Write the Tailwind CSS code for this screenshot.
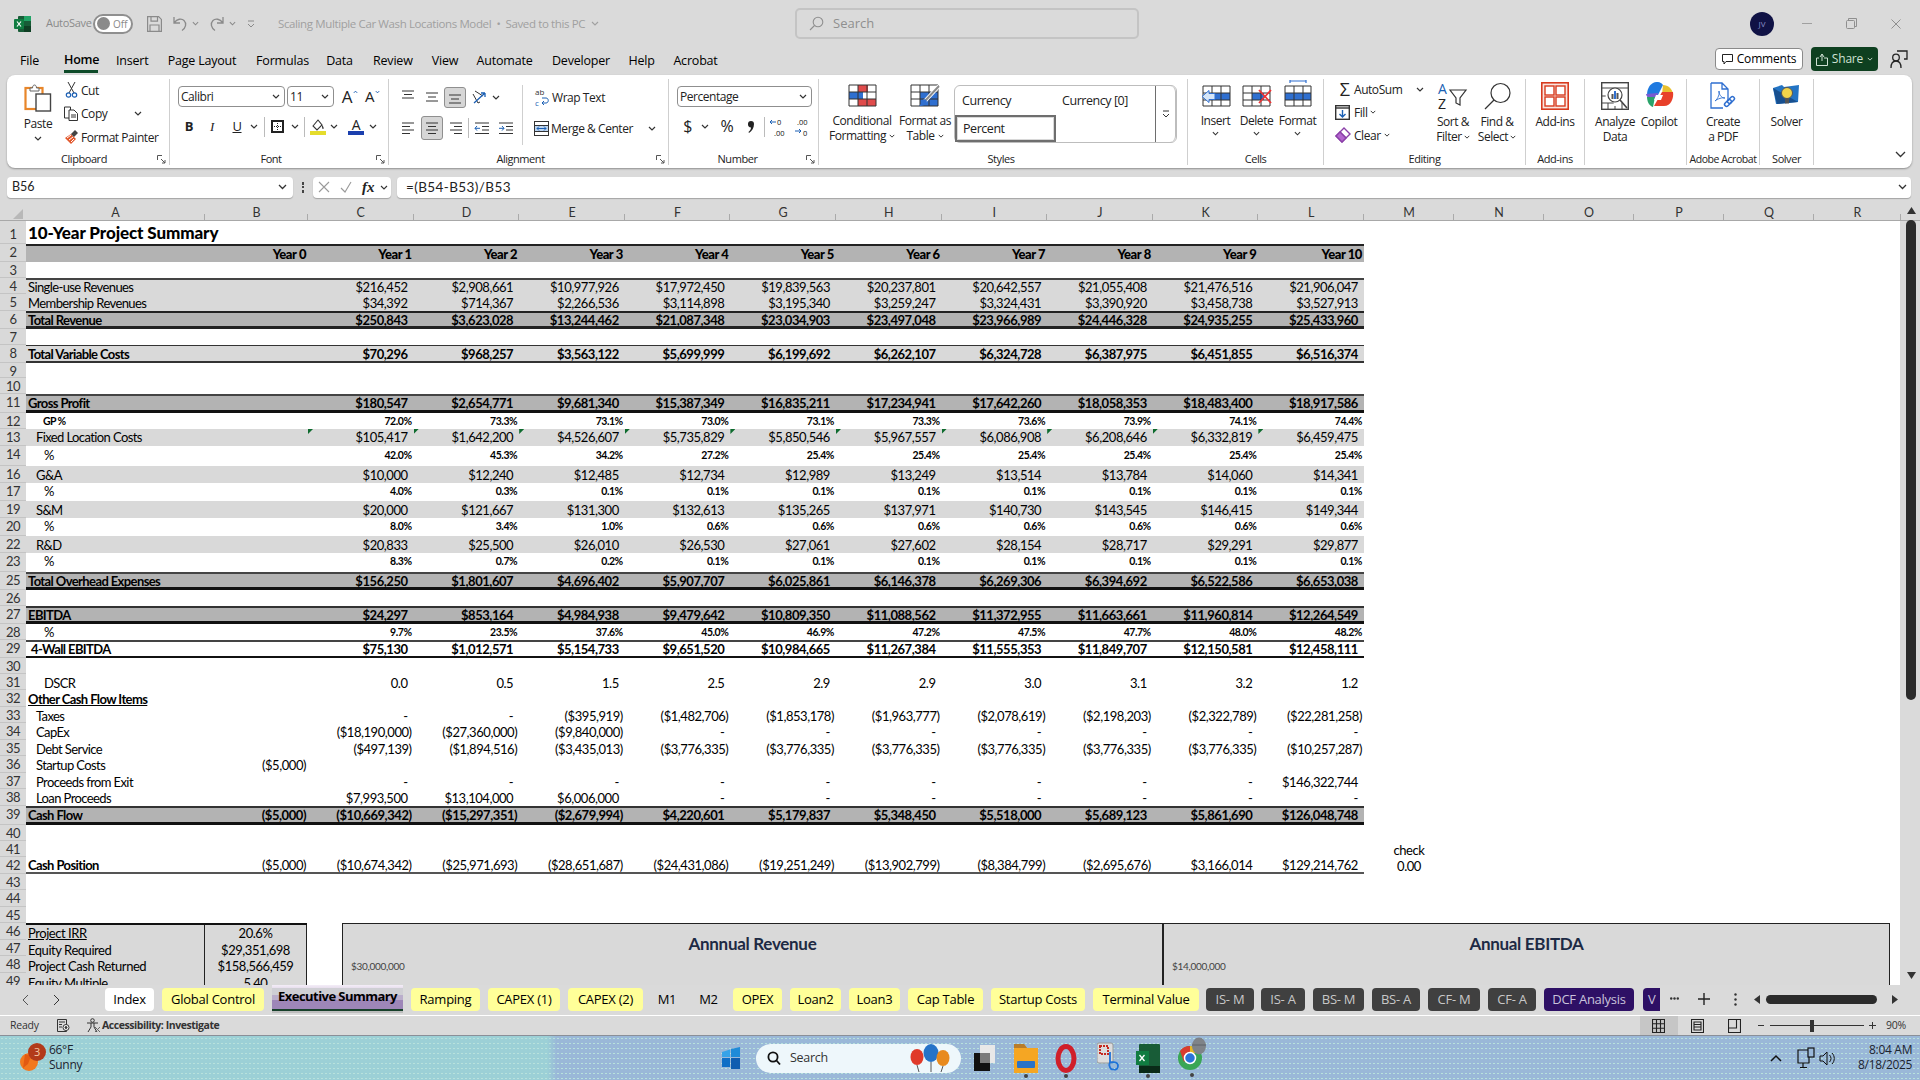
<!DOCTYPE html>
<html lang="en">
<head>
<meta charset="utf-8">
<title>Scaling Multiple Car Wash Locations Model</title>
<script src="https://cdn.jsdelivr.net/npm/@tailwindcss/browser@4"></script>
</head>
<body class="m-0">
<div class="flex flex-col w-[1920px] h-[1080px] overflow-hidden bg-[#dadada] font-['Open_Sans',sans-serif] text-black">

<!-- Title bar -->
<header class="flex items-center h-[47px] shrink-0 text-[11px] text-[#8a8a8a]">
  <svg class="ml-[14px] w-[17px] h-[16px]" viewBox="0 0 17 16"><rect x="4" y="0" width="13" height="16" rx="1" fill="#185c37"/><rect x="10" y="0" width="7" height="5" fill="#21a366"/><rect x="10" y="10" width="7" height="6" fill="#0f3f24"/><rect x="0" y="3" width="10" height="10" rx="1" fill="#107c41"/><path d="M3 5.5l4 5M7 5.5l-4 5" stroke="#fff" stroke-width="1.2"/></svg>
  <span class="ml-[15px] w-[41px] tracking-[-0.3px]">AutoSave</span>
  <div class="ml-[6px] flex items-center w-[40px] h-[20px] rounded-full border-2 border-[#8f8f8f] bg-white">
    <span class="ml-[2px] w-[13px] h-[13px] rounded-full bg-[#8a8a8a]"></span><span class="ml-[3px] text-[10px] leading-none">Off</span>
  </div>
  <svg class="ml-[14px] w-[15px] h-[16px]" viewBox="0 0 15 16" fill="none" stroke="#8a8a8a" stroke-width="1.2"><path d="M.6.6h11l2.8 2.8v12H.6zM4 .6v4.5h6.5V.6M3 15.4V9h9v6.4"/></svg>
  <svg class="ml-[11px] w-[15px] h-[16px]" viewBox="0 0 15 16" fill="none" stroke="#8a8a8a" stroke-width="1.3"><path d="M1 1v6h6M1.4 6.5C4 3 8.5 2 11 4.5c3 3 1.800 7.500-2 10"/></svg>
  <svg class="ml-[4px] w-[7px] h-[5px]" viewBox="0 0 8 5" fill="none" stroke="#8a8a8a" stroke-width="1.200"><path d="M1 1l3 3 3-3"/></svg>
  <svg class="ml-[10px] w-[15px] h-[16px]" viewBox="0 0 15 16" fill="none" stroke="#8a8a8a" stroke-width="1.300"><path d="M14 1v6H8M13.600 6.500C11 3 6.500 2 4 4.500c-3 3-1.800 7.500 2 10"/></svg>
  <svg class="ml-[5px] w-[7px] h-[5px]" viewBox="0 0 8 5" fill="none" stroke="#8a8a8a" stroke-width="1.200"><path d="M1 1l3 3 3-3"/></svg>
  <svg class="ml-[11px] w-[8px] h-[8px]" viewBox="0 0 8 8" fill="none" stroke="#8a8a8a"><path d="M1 1h6M1 4l3 3 3-3"/></svg>
  <div class="ml-[23px] w-[322px] flex items-center gap-[6px] text-[#a0a0a0] text-[11.5px] tracking-[-0.38px] whitespace-nowrap">Scaling Multiple Car Wash Locations Model &nbsp;•&nbsp; Saved to this PC
    <svg class="shrink-0 w-[8px] h-[5px]" viewBox="0 0 8 5" fill="none" stroke="#a0a0a0" stroke-width="1.100"><path d="M1 1l3 3 3-3"/></svg></div>
  <div class="ml-[195px] flex items-center w-[344px] h-[31px] rounded-[5px] border-2 border-[#c4c4c4] text-[#8f8f8f] text-[13px]">
    <svg class="ml-[12px] w-[15px] h-[15px]" viewBox="0 0 15 15" fill="none" stroke="#8f8f8f" stroke-width="1.100"><circle cx="9" cy="6" r="4.800"/><path d="M5.500 9.500L1 14"/></svg>
    <span class="ml-[9px]">Search</span>
  </div>
  <div class="ml-[611px] flex items-center justify-center w-[24px] h-[24px] rounded-full bg-[#101245] text-[#8a90c8] text-[8px]">JV</div>
  <span class="ml-[28px] w-[10px] h-[1px] bg-[#a0a0a0]"></span>
  <svg class="ml-[34px] w-[11px] h-[11px]" viewBox="0 0 11 11" fill="none" stroke="#8f8f8f"><rect x=".5" y="2.500" width="8" height="8" rx="1"/><path d="M2.500 2.500V.5h8v8H8.500"/></svg>
  <svg class="ml-[34px] w-[10px] h-[10px]" viewBox="0 0 10 10" stroke="#8f8f8f"><path d="M.5.5l9 9M9.500.5l-9 9"/></svg>
</header>

<!-- Menu tabs -->
<nav class="flex items-center h-[28px] shrink-0 text-[12.5px] tracking-[-0.2px] text-black whitespace-nowrap">
  <span class="ml-[20px] w-[18px] text-center">File</span>
  <span class="ml-[26px] w-[34px] text-center font-semibold self-start h-[26px] pt-[4px] border-b-[3px] border-[#0d4a28]">Home</span>
  <span class="ml-[18px] w-[32px] text-center">Insert</span>
  <span class="ml-[19px] w-[70px] text-center">Page Layout</span>
  <span class="ml-[19px] w-[53px] text-center">Formulas</span>
  <span class="ml-[17px] w-[27px] text-center">Data</span>
  <span class="ml-[20px] w-[39px] text-center">Review</span>
  <span class="ml-[19px] w-[28px] text-center">View</span>
  <span class="ml-[17px] w-[57px] text-center">Automate</span>
  <span class="ml-[19px] w-[58px] text-center">Developer</span>
  <span class="ml-[18px] w-[27px] text-center">Help</span>
  <span class="ml-[18px] w-[45px] text-center">Acrobat</span>
  <div class="ml-auto flex items-center justify-center gap-[4px] w-[88px] h-[22px] rounded-[4px] bg-white border border-[#8a8a8a] text-[12px] -mt-[4px]">
    <svg class="w-[11px] h-[11px]" viewBox="0 0 11 11" fill="none" stroke="#222"><path d="M.5.5h10v7H4L2 10V7.500H.5z"/></svg>Comments</div>
  <div class="ml-[8px] flex items-center justify-center gap-[4px] w-[67px] h-[24px] rounded-[4px] bg-[#0e4020] text-[#cfe0d4] text-[12px] -mt-[4px]">
    <svg class="w-[12px] h-[13px]" viewBox="0 0 12 13" fill="none" stroke="#cfe0d4"><path d="M8 5h3.500v7.500H.5V5H3M4 4l2-3 2 3M6 1v7"/></svg>Share
    <svg class="w-[6px] h-[4px]" viewBox="0 0 8 5" fill="none" stroke="#cfe0d4" stroke-width="1.200"><path d="M1 1l3 3 3-3"/></svg></div>
  <svg class="ml-[12px] mr-[12px] w-[18px] h-[19px] -mt-[4px]" viewBox="0 0 18 19" fill="none" stroke="#222" stroke-width="1.300"><path d="M7 1h10v8h-3M1 18c0-5 2-7 5-7s5 2 5 7"/><circle cx="6" cy="7.500" r="3.300"/></svg>
</nav>

<!-- Ribbon -->
<section class="flex mx-[7px] w-[1905px] h-[93px] shrink-0 rounded-[8px] bg-white shadow-[0_1px_2px_rgba(0,0,0,0.35)] text-[12px] leading-[15px] tracking-[-0.45px] text-[#222] pt-[4px] whitespace-nowrap">

  <!-- Clipboard -->
  <div class="w-[163px] h-[86px] border-r border-[#cfcfcf] flex flex-col">
    <div class="flex h-[74px] pl-[5px]">
      <div class="w-[52px] flex flex-col items-center pt-[4px]">
        <svg class="w-[28px] h-[29px]" viewBox="0 0 28 29" fill="none"><rect x="1.500" y="5" width="17" height="21" stroke="#e8862a" stroke-width="2.200"/><path d="M6 5h2.500c0-4 4-4 4 0H15v3H6z" fill="#fff" stroke="#666"/><rect x="12" y="11" width="14.500" height="17" fill="#fff" stroke="#444" stroke-width="1.400"/></svg>
        <span class="mt-[4px]">Paste</span>
        <svg class="mt-[5px] w-[8px] h-[5px]" viewBox="0 0 8 5" fill="none" stroke="#333" stroke-width="1.200"><path d="M1 1l3 3 3-3"/></svg>
      </div>
      <div class="flex flex-col gap-[1.500px]">
        <div class="flex items-center h-[22px]"><svg class="ml-[1px] w-[13px] h-[16px]" viewBox="0 0 13 16" fill="none"><path d="M3 0l6 11M10 0L4 11" stroke="#333"/><circle cx="3.500" cy="13" r="2.200" stroke="#1a5fb4" stroke-width="1.200"/><circle cx="9.500" cy="13" r="2.200" stroke="#1a5fb4" stroke-width="1.200"/></svg><span class="ml-[3px]">Cut</span></div>
        <div class="flex items-center h-[22px]"><svg class="w-[15px] h-[15px]" viewBox="0 0 15 15" fill="none" stroke="#333"><path d="M.5 1h6v11H.5z"/><path d="M5 4h5l3.500 3.500V14.500H5z" fill="#fff"/><path d="M7 9h5M7 11h5"/></svg><span class="ml-[2px]">Copy</span><svg class="ml-[27px] w-[8px] h-[5px]" viewBox="0 0 8 5" fill="none" stroke="#333" stroke-width="1.200"><path d="M1 1l3 3 3-3"/></svg></div>
        <div class="flex items-center h-[22px]"><svg class="w-[15px] h-[16px]" viewBox="0 0 15 16"><path d="M1 9l6-4 5 5-5 5C5 13 3 11 1 9z" fill="#e2572b"/><path d="M3 9l4-3M5 11l4-3M7 13l3-3" stroke="#fff"/><path d="M7 5l4-4 3 3-4 4" fill="#444"/></svg><span class="ml-[2px]">Format Painter</span></div>
      </div>
    </div>
    <div class="relative h-[12px] text-center text-[11px] leading-[12px] pr-[8px]">Clipboard<svg class="absolute right-[3px] top-[2px] w-[9px] h-[9px]" viewBox="0 0 9 9" fill="none" stroke="#555"><path d="M.5 5V.5H5M4 4l4 4M8 5v3H5"/></svg></div>
  </div>

  <!-- Font -->
  <div class="w-[219px] h-[86px] border-r border-[#cfcfcf] flex flex-col">
    <div class="h-[74px] pl-[8px]">
      <div class="flex items-center mt-[7px] h-[21px]">
        <div class="flex items-center justify-between w-[107px] h-[21px] pl-[2px] pr-[4px] border border-[#8f8f8f] rounded-[4px]">Calibri<svg class="w-[8px] h-[5px]" viewBox="0 0 8 5" fill="none" stroke="#333" stroke-width="1.200"><path d="M1 1l3 3 3-3"/></svg></div>
        <div class="ml-[2px] flex items-center justify-between w-[47px] h-[21px] pl-[2px] pr-[4px] border border-[#8f8f8f] rounded-[4px]">11<svg class="w-[8px] h-[5px]" viewBox="0 0 8 5" fill="none" stroke="#333" stroke-width="1.200"><path d="M1 1l3 3 3-3"/></svg></div>
        <span class="ml-[7px] w-[12px] text-[17px] text-center">A</span><svg class="w-[5px] h-[4px] -mt-[9px]" viewBox="0 0 6 4" fill="none" stroke="#1a5fb4" stroke-width="1.200"><path d="M1 3l2-2 2 2"/></svg>
        <span class="ml-[6px] w-[11px] text-[15px] text-center">A</span><svg class="w-[5px] h-[4px] -mt-[9px]" viewBox="0 0 6 4" fill="none" stroke="#1a5fb4" stroke-width="1.200"><path d="M1 1l2 2 2-2"/></svg>
      </div>
      <div class="flex items-center mt-[9px] h-[21px]">
        <span class="w-[22px] text-center font-bold text-[13px]">B</span>
        <span class="ml-[1px] w-[22px] text-center italic text-[13px] font-['Liberation_Serif',serif]">I</span>
        <span class="ml-[3px] w-[22px] text-center underline text-[13px]">U</span>
        <svg class="ml-[2px] w-[8px] h-[5px]" viewBox="0 0 8 5" fill="none" stroke="#333" stroke-width="1.200"><path d="M1 1l3 3 3-3"/></svg>
        <span class="ml-[6px] w-px h-[20px] bg-[#bbb]"></span>
        <svg class="ml-[6px] w-[13px] h-[13px]" viewBox="0 0 13 13" fill="none" stroke="#222"><rect x="1" y="1" width="11" height="11" stroke-width="2"/><path d="M6.500 1v11M1 6.500h11" stroke-dasharray="1 1"/></svg>
        <svg class="ml-[7px] w-[8px] h-[5px]" viewBox="0 0 8 5" fill="none" stroke="#333" stroke-width="1.200"><path d="M1 1l3 3 3-3"/></svg>
        <span class="ml-[5px] w-px h-[20px] bg-[#bbb]"></span>
        <svg class="ml-[5px] w-[16px] h-[17px]" viewBox="0 0 16 17"><path d="M3 8l5-6 4 5-5 5z" fill="none" stroke="#333" stroke-width="1.100"/><path d="M12 7c2 2 2 4 1 4s-1-2-1-4z" fill="#333"/><rect x="0" y="13" width="16" height="4" fill="#e5dc2b"/></svg>
        <svg class="ml-[4px] w-[8px] h-[5px]" viewBox="0 0 8 5" fill="none" stroke="#333" stroke-width="1.200"><path d="M1 1l3 3 3-3"/></svg>
        <div class="ml-[10px] flex flex-col items-center w-[16px] leading-[12px] text-[14px]"><span>A</span><span class="w-[16px] h-[4px] bg-[#1b3fae]"></span></div>
        <svg class="ml-[5px] w-[8px] h-[5px]" viewBox="0 0 8 5" fill="none" stroke="#333" stroke-width="1.200"><path d="M1 1l3 3 3-3"/></svg>
      </div>
    </div>
    <div class="relative h-[12px] text-center text-[11px] leading-[12px] pr-[16px]">Font<svg class="absolute right-[3px] top-[2px] w-[9px] h-[9px]" viewBox="0 0 9 9" fill="none" stroke="#555"><path d="M.5 5V.5H5M4 4l4 4M8 5v3H5"/></svg></div>
  </div>

  <!-- Alignment -->
  <div class="w-[280px] h-[86px] border-r border-[#cfcfcf] flex flex-col">
    <div class="flex h-[74px]">
      <div class="w-[134px] h-[60px] mt-[6px] border-r border-[#cfcfcf] pl-[7px]">
        <div class="flex items-center h-[22px] mt-[1px]">
          <div class="flex justify-center items-start w-[24px] h-[21px] pt-[3px]"><svg class="w-[14px] h-[11px]" viewBox="0 0 14 11" stroke="#333"><path d="M1 1h12M3 4.500h8M1 8h12"/></svg></div>
          <div class="flex justify-center items-center w-[24px] h-[21px]"><svg class="w-[14px] h-[11px]" viewBox="0 0 14 11" stroke="#333"><path d="M1 1h12M3 5h8M1 9h12"/></svg></div>
          <div class="flex justify-center items-end w-[22px] h-[21px] pb-[3px] bg-[#d6d6d6] border border-[#8f8f8f] rounded-[3px]"><svg class="w-[14px] h-[11px]" viewBox="0 0 14 11" stroke="#333"><path d="M1 2h12M3 6h8M1 10h12"/></svg></div>
          <svg class="ml-[5px] w-[16px] h-[16px]" viewBox="0 0 16 16" fill="none"><path d="M2 5l5 9 2-1M4 2l8 5" stroke="#333"/><path d="M3 14L14 4M14 4h-4M14 4v4" stroke="#1a5fb4" stroke-width="1.300"/></svg>
          <svg class="ml-[5px] w-[8px] h-[5px]" viewBox="0 0 8 5" fill="none" stroke="#333" stroke-width="1.200"><path d="M1 1l3 3 3-3"/></svg>
        </div>
        <div class="flex items-center h-[22px] mt-[9px]">
          <div class="flex justify-center items-center w-[24px] h-[21px]"><svg class="w-[14px] h-[13px]" viewBox="0 0 14 13" stroke="#333"><path d="M1 1h12M1 4.500h8M1 8h12M1 11.500h8"/></svg></div>
          <div class="flex justify-center items-center w-[22px] h-[24px] mx-[1px] bg-[#d6d6d6] border border-[#8f8f8f] rounded-[3px]"><svg class="w-[14px] h-[13px]" viewBox="0 0 14 13" stroke="#333"><path d="M1 1h12M3 4.500h8M1 8h12M3 11.500h8"/></svg></div>
          <div class="flex justify-center items-center w-[24px] h-[21px]"><svg class="w-[14px] h-[13px]" viewBox="0 0 14 13" stroke="#333"><path d="M1 1h12M5 4.500h8M1 8h12M5 11.500h8"/></svg></div>
          <span class="w-px h-[20px] bg-[#bbb]"></span>
          <svg class="ml-[5px] w-[16px] h-[13px]" viewBox="0 0 16 13" fill="none" stroke="#333"><path d="M1 1h14M8 4.500h7M8 8h7M1 11.500h14"/><path d="M6 6.300H1M3 4L1 6.300l2 2.300" stroke="#1a5fb4"/></svg>
          <svg class="ml-[8px] w-[16px] h-[13px]" viewBox="0 0 16 13" fill="none" stroke="#333"><path d="M1 1h14M8 4.500h7M8 8h7M1 11.500h14"/><path d="M1 6.300h5M4 4l2 2.300-2 2.300" stroke="#1a5fb4"/></svg>
        </div>
      </div>
      <div class="pl-[10px] mt-[6px]">
        <div class="flex items-center h-[22px] mt-[1px]"><svg class="w-[18px] h-[18px] overflow-visible" viewBox="0 0 18 18" fill="none"><text x="2" y="7" font-size="8" letter-spacing="0" fill="#333" font-family="Open Sans">ab</text><text x="2" y="18" font-size="8" letter-spacing="0" fill="#1a5fb4" font-family="Open Sans">c</text><path d="M9 10h4c3 0 3 5 0 5h-4M11 13l-2 2 2 2" stroke="#1a5fb4"/></svg><span class="ml-[1px]">Wrap Text</span></div>
        <div class="flex items-center h-[22px] mt-[9px]"><svg class="ml-[1px] w-[15px] h-[15px] mr-[2px]" viewBox="0 0 15 15" fill="none" stroke="#333"><rect x=".5" y=".5" width="14" height="14"/><path d="M.5 4.500h14M.5 10.500h14"/><rect x="1" y="5" width="13" height="5" fill="#bcd4ef" stroke="none"/><path d="M3 7.500h9M5 5.500l-2 2 2 2M10 5.500l2 2-2 2" stroke="#1a5fb4"/></svg><span>Merge &amp; Center</span><svg class="ml-[15px] w-[8px] h-[5px]" viewBox="0 0 8 5" fill="none" stroke="#333" stroke-width="1.200"><path d="M1 1l3 3 3-3"/></svg></div>
      </div>
    </div>
    <div class="relative h-[12px] text-center text-[11px] leading-[12px] pr-[16px]">Alignment<svg class="absolute right-[3px] top-[2px] w-[9px] h-[9px]" viewBox="0 0 9 9" fill="none" stroke="#555"><path d="M.5 5V.5H5M4 4l4 4M8 5v3H5"/></svg></div>
  </div>

  <!-- Number -->
  <div class="w-[150px] h-[86px] border-r border-[#cfcfcf] flex flex-col">
    <div class="h-[74px] pl-[8px]">
      <div class="flex items-center justify-between mt-[7px] w-[135px] h-[21px] pl-[2px] pr-[4px] border border-[#8f8f8f] rounded-[4px]">Percentage<svg class="w-[8px] h-[5px]" viewBox="0 0 8 5" fill="none" stroke="#333" stroke-width="1.200"><path d="M1 1l3 3 3-3"/></svg></div>
      <div class="flex items-center mt-[9px] h-[21px]">
        <span class="ml-[5px] w-[11px] text-center text-[16px]">$</span>
        <svg class="ml-[8px] w-[8px] h-[5px]" viewBox="0 0 8 5" fill="none" stroke="#333" stroke-width="1.200"><path d="M1 1l3 3 3-3"/></svg>
        <span class="ml-[10px] w-[16px] text-center text-[16px]">%</span>
        <svg class="ml-[12px] w-[8px] h-[13px]" viewBox="0 0 8 13"><path d="M1 4a3 3 0 1 1 6 0c0 4-2 7-5 9l-.5-1c1.500-1 2.500-3 2.500-4.500A3 3 0 0 1 1 4z" fill="#222"/></svg>
        <span class="ml-[9px] w-px h-[20px] bg-[#bbb]"></span>
        <svg class="ml-[4px] w-[18px] h-[18px] overflow-visible" viewBox="0 0 18 18"><text x="8" y="7" font-size="7.500" letter-spacing="0" fill="#111" font-family="Open Sans">0</text><text x="5" y="17.500" font-size="7.500" letter-spacing="0" fill="#111" font-family="Open Sans">.00</text><path d="M7 4H1M3 2L1 4l2 2" fill="none" stroke="#1a5fb4"/></svg>
        <svg class="ml-[5px] w-[18px] h-[18px] overflow-visible" viewBox="0 0 18 18"><text x="5" y="7" font-size="7.500" letter-spacing="0" fill="#111" font-family="Open Sans">.00</text><text x="11" y="17.500" font-size="7.500" letter-spacing="0" fill="#111" font-family="Open Sans">0</text><path d="M3 13h6M7 11l2 2-2 2" fill="none" stroke="#1a5fb4"/></svg>
      </div>
    </div>
    <div class="relative h-[12px] text-center text-[11px] leading-[12px] pr-[12px]">Number<svg class="absolute right-[3px] top-[2px] w-[9px] h-[9px]" viewBox="0 0 9 9" fill="none" stroke="#555"><path d="M.5 5V.5H5M4 4l4 4M8 5v3H5"/></svg></div>
  </div>

  <!-- Styles -->
  <div class="w-[369px] h-[86px] border-r border-[#cfcfcf] flex flex-col">
    <div class="flex h-[74px] pl-[13px]">
      <div class="w-[60px] flex flex-col items-center pt-[5px]">
        <svg class="w-[29px] h-[23px] mb-[6px]" viewBox="0 0 29 23" fill="none"><rect x="10" y="1" width="10" height="7" fill="#e04b4b"/><rect x="10" y="15" width="18" height="7" fill="#e04b4b"/><rect x="1" y="8" width="14" height="7" fill="#2f6fd0"/><path d="M1 1h27v21H1zM1 8h27M1 15h27M10 1v21M19 1v21" stroke="#333"/></svg>
        <span>Conditional</span>
        <span class="flex items-center gap-[3px]">Formatting<svg class="w-[6px] h-[4px]" viewBox="0 0 8 5" fill="none" stroke="#333" stroke-width="1.300"><path d="M1 1l3 3 3-3"/></svg></span>
      </div>
      <div class="ml-[8px] w-[50px] flex flex-col items-center pt-[5px]">
        <svg class="w-[30px] h-[23px] mb-[6px]" viewBox="0 0 30 23" fill="none"><rect x="10" y="8" width="18" height="14" fill="#2f6fd0"/><path d="M1 1h27v21H1zM1 8h27M1 15h27M10 1v21M19 1v21" stroke="#333"/><path d="M29 2L15 17" stroke="#fff" stroke-width="4"/><path d="M29 2L15 17" stroke="#8a8a8a" stroke-width="2"/><path d="M15 15c-3 1-3 5-6 7 4 0 7-1 8-5z" fill="#2f6fd0"/></svg>
        <span>Format as</span>
        <span class="flex items-center gap-[3px]">Table<svg class="w-[6px] h-[4px]" viewBox="0 0 8 5" fill="none" stroke="#333" stroke-width="1.300"><path d="M1 1l3 3 3-3"/></svg></span>
      </div>
      <div class="ml-[4px] mt-[6px] flex w-[223px] h-[58px] border border-[#bdbdbd] rounded-[6px] text-[12.5px]">
        <div class="w-[202px]">
          <div class="flex items-center h-[29px] pl-[7px]"><span class="w-[100px]">Currency</span><span>Currency [0]</span></div>
          <div class="flex items-center w-[101px] h-[27px] pl-[6px] border-[2px] border-[#6e6e6e] shadow-[inset_0_0_0_1px_#d8d8d8]">Percent</div>
        </div>
        <div class="flex items-center justify-center w-[21px] border-x border-[#6e6e6e] border-r-[#bdbdbd] rounded-r-[6px]"><svg class="w-[8px] h-[8px]" viewBox="0 0 8 8" fill="none" stroke="#333"><path d="M1 1h6M1 4l3 3 3-3"/></svg></div>
      </div>
    </div>
    <div class="h-[12px] text-center text-[11px] leading-[12px] pr-[4px]">Styles</div>
  </div>

  <!-- Cells -->
  <div class="w-[136px] h-[86px] border-r border-[#cfcfcf] flex flex-col">
    <div class="flex h-[74px] pl-[7px]">
      <div class="w-[41px] flex flex-col items-center pt-[6px]">
        <svg class="w-[30px] h-[22px] mb-[6px]" viewBox="0 0 30 22" fill="none"><rect x="12" y="8" width="17" height="7" fill="#2f6fd0"/><path d="M2 1h27v20H2zM2 8h27M2 15h27M11 1v20M20 1v20" stroke="#333"/><path d="M1 11.500l7-6v3h6v6H8v3z" fill="#d6e6f8" stroke="#2f6fd0"/></svg>
        <span>Insert</span>
        <svg class="mt-[3px] w-[7px] h-[5px]" viewBox="0 0 8 5" fill="none" stroke="#333" stroke-width="1.200"><path d="M1 1l3 3 3-3"/></svg>
      </div>
      <div class="w-[41px] flex flex-col items-center pt-[6px]">
        <svg class="w-[30px] h-[22px] mb-[6px]" viewBox="0 0 30 22" fill="none"><rect x="10" y="8" width="12" height="7" fill="#2f6fd0"/><path d="M1 1h27v20H1zM1 8h27M1 15h27M10 1v20M19 1v20" stroke="#333"/><path d="M17 5l12 13M29 5L17 18" stroke="#e33" stroke-width="1.800"/></svg>
        <span>Delete</span>
        <svg class="mt-[3px] w-[7px] h-[5px]" viewBox="0 0 8 5" fill="none" stroke="#333" stroke-width="1.200"><path d="M1 1l3 3 3-3"/></svg>
      </div>
      <div class="w-[41px] flex flex-col items-center pt-[1px]">
        <svg class="w-[28px] h-[27px] mb-[6px]" viewBox="0 0 28 27" fill="none"><path d="M6 1h16M6 0v3M22 0v3" stroke="#2f6fd0" stroke-width="1.200"/><rect x="1" y="13" width="26" height="7" fill="#2f6fd0"/><path d="M1 6h26v20H1zM1 13h26M1 20h26M10 6v20M19 6v20" stroke="#333"/></svg>
        <span>Format</span>
        <svg class="mt-[3px] w-[7px] h-[5px]" viewBox="0 0 8 5" fill="none" stroke="#333" stroke-width="1.200"><path d="M1 1l3 3 3-3"/></svg>
      </div>
    </div>
    <div class="h-[12px] text-center text-[11px] leading-[12px]">Cells</div>
  </div>

  <!-- Editing -->
  <div class="w-[202px] h-[86px] border-r border-[#cfcfcf] flex flex-col">
    <div class="flex h-[74px] pl-[11px]">
      <div class="w-[96px] flex flex-col gap-[1px] -mt-[1px]">
        <div class="flex items-center h-[22px]"><span class="w-[19px] text-[18px] text-center leading-none">Σ</span><span>AutoSum</span><svg class="ml-[14px] w-[8px] h-[5px]" viewBox="0 0 8 5" fill="none" stroke="#333" stroke-width="1.200"><path d="M1 1l3 3 3-3"/></svg></div>
        <div class="flex items-center h-[22px]"><svg class="w-[15px] h-[15px] mr-[4px]" viewBox="0 0 15 15" fill="none"><rect x=".7" y=".7" width="13.600" height="13.600" stroke="#333" stroke-width="1.400"/><path d="M0 3h15" stroke="#333" stroke-width="1.400"/><path d="M7.500 5v7M4.500 9l3 3 3-3" stroke="#1a5fb4" stroke-width="1.400"/></svg><span>Fill</span><svg class="ml-[3px] w-[6px] h-[4px]" viewBox="0 0 8 5" fill="none" stroke="#333" stroke-width="1.300"><path d="M1 1l3 3 3-3"/></svg></div>
        <div class="flex items-center h-[22px]"><svg class="w-[16px] h-[16px] mr-[3px]" viewBox="0 0 16 16" fill="#fff" stroke="#8a3fa8" stroke-width="1.400"><path d="M9 1l6 6-8 8-6-6z"/><path d="M5 5l6 6" /><path d="M1 9l4-4 6 6-4 4z" fill="#b467cf"/></svg><span>Clear</span><svg class="ml-[3px] w-[6px] h-[4px]" viewBox="0 0 8 5" fill="none" stroke="#333" stroke-width="1.300"><path d="M1 1l3 3 3-3"/></svg></div>
      </div>
      <div class="w-[44px] flex flex-col items-center pt-[3px]">
        <svg class="w-[30px] h-[28px] mb-[4px] overflow-visible" viewBox="0 0 30 28" fill="none"><text x="0" y="12" font-size="14" letter-spacing="0" fill="#1a5fb4" font-family="Open Sans">A</text><text x="0" y="27" font-size="14" letter-spacing="0" fill="#222" font-family="Open Sans">Z</text><path d="M12 8h16l-6 8v7l-4 -2v-5z" stroke="#333" stroke-width="1.200"/></svg>
        <span>Sort &amp;</span>
        <span class="flex items-center gap-[2px]">Filter<svg class="w-[6px] h-[4px]" viewBox="0 0 8 5" fill="none" stroke="#333" stroke-width="1.300"><path d="M1 1l3 3 3-3"/></svg></span>
      </div>
      <div class="w-[44px] flex flex-col items-center pt-[3px]">
        <svg class="w-[29px] h-[28px] mb-[4px]" viewBox="0 0 29 28" fill="none" stroke="#333" stroke-width="1.200"><circle cx="17.500" cy="11" r="9.500"/><path d="M11 18L2 27"/></svg>
        <span>Find &amp;</span>
        <span class="flex items-center gap-[2px]">Select<svg class="w-[6px] h-[4px]" viewBox="0 0 8 5" fill="none" stroke="#333" stroke-width="1.300"><path d="M1 1l3 3 3-3"/></svg></span>
      </div>
    </div>
    <div class="h-[12px] text-center text-[11px] leading-[12px]">Editing</div>
  </div>

  <!-- Add-ins -->
  <div class="w-[59px] h-[86px] border-r border-[#cfcfcf] flex flex-col">
    <div class="flex flex-col items-center h-[74px] pt-[3px]">
      <svg class="w-[28px] h-[28px] mb-[4px]" viewBox="0 0 28 28" fill="none"><rect x=".8" y=".8" width="26.400" height="26.400" stroke="#d83b1f" stroke-width="1.600" fill="#f9e6e0"/><rect x="4" y="4" width="9" height="9" fill="#fff" stroke="#d83b1f" stroke-width="1.400"/><rect x="15" y="4" width="9" height="9" fill="#fff" stroke="#d83b1f" stroke-width="1.400"/><rect x="4" y="15" width="9" height="9" fill="#fff" stroke="#d83b1f" stroke-width="1.400"/><rect x="15" y="15" width="9" height="9" fill="#fff" stroke="#d83b1f" stroke-width="1.400"/></svg>
      <span>Add-ins</span>
    </div>
    <div class="h-[12px] text-center text-[11px] leading-[12px]">Add-ins</div>
  </div>

  <!-- Analyze / Copilot -->
  <div class="w-[102px] h-[86px] border-r border-[#cfcfcf] flex pl-[8px]">
    <div class="w-[44px] flex flex-col items-center pt-[3px]">
      <svg class="w-[28px] h-[28px] mb-[4px]" viewBox="0 0 28 28" fill="none" stroke="#444"><rect x=".7" y=".7" width="26.600" height="26.600" stroke-width="1.400"/><path d="M.7 6h26.600M.7 14h4M.7 21h12M7 21v6M14 24v3M21 21v6" /><circle cx="14" cy="13" r="7" fill="#fff" stroke-width="1.200"/><rect x="10.500" y="12" width="2" height="5" fill="#555" stroke="none"/><rect x="13" y="9" width="2" height="8" fill="#2f6fd0" stroke="none"/><rect x="15.500" y="11" width="2" height="6" fill="#555" stroke="none"/><path d="M19 18l7 8" stroke-width="1.600"/></svg>
      <span>Analyze</span><span>Data</span>
    </div>
    <div class="w-[44px] flex flex-col items-center pt-[3px]">
      <svg class="w-[29px] h-[28px] mb-[4px]" viewBox="0 0 29 28"><path d="M8 1c4-2 8-1 10 2l-5 10H2C2 8 4 3 8 1z" fill="#1f7ae0"/><path d="M1 12l12-1-2 6c-3 1-9 0-10-5z" fill="#7a5ad0"/><path d="M2 15l8 0-2 10c-4-1-6-6-6-10z" fill="#2aa36a"/><path d="M18 3c5 0 10 4 10 10H17z" fill="#e8c030"/><path d="M17 10h11c1 6-2 14-9 14H9z" fill="#e8402a"/><path d="M11 13h7l-2 5h-7z" fill="#fff"/></svg>
      <span>Copilot</span>
    </div>
  </div>

  <!-- Acrobat -->
  <div class="w-[73px] h-[86px] border-r border-[#cfcfcf] flex flex-col">
    <div class="flex flex-col items-center h-[74px] pt-[3px]">
      <svg class="w-[26px] h-[28px] mb-[4px]" viewBox="0 0 26 28" fill="none" stroke="#2f6fd0" stroke-width="1.300"><path d="M1 1h11l6 6v12M1 1v25h12M12 1v6h6"/><path d="M5 19c3-2 5-8 4-10-1 2 3 8 6 7-2-1-8 1-10 3z" stroke-width=".9"/><rect x="14" y="19" width="8" height="4" rx="2" transform="rotate(-45 18 21)" stroke-width="1.500"/><rect x="17" y="16" width="8" height="4" rx="2" transform="rotate(-45 21 18)" stroke-width="1.500"/></svg>
      <span>Create</span><span>a PDF</span>
    </div>
    <div class="h-[12px] text-center text-[10.5px] leading-[12px]">Adobe Acrobat</div>
  </div>

  <!-- Solver -->
  <div class="w-[54px] h-[86px] border-r border-[#cfcfcf] flex flex-col">
    <div class="flex flex-col items-center h-[74px] pt-[3px]">
      <svg class="w-[29px] h-[28px] mb-[4px]" viewBox="0 0 29 28"><path d="M1 6l9-3 2 2 15-2-1 17-22 2z" fill="#2374c4"/><path d="M1 6l4 16 21-2" fill="#174f8f"/><circle cx="15" cy="11" r="5.500" fill="#f2d44a" stroke="#555"/><rect x="13" y="16.500" width="4" height="5" fill="#555"/></svg>
      <span>Solver</span>
    </div>
    <div class="h-[12px] text-center text-[11px] leading-[12px]">Solver</div>
  </div>

  <svg class="ml-[81px] mt-[72px] w-[11px] h-[7px]" viewBox="0 0 11 7" fill="none" stroke="#333" stroke-width="1.300"><path d="M1 1l4.500 4.500L10 1"/></svg>
</section>

<!-- Formula bar -->
<div class="flex items-center mt-[9px] h-[20px] shrink-0 text-[12.5px] font-[Lato,sans-serif] text-[#222]">
  <div class="ml-[7px] flex items-center justify-between w-[286px] h-[21px] pl-[5px] pr-[6px] rounded-[4px] bg-white shadow-[0_1px_1px_rgba(0,0,0,0.25)]">B56<svg class="w-[9px] h-[6px]" viewBox="0 0 9 6" fill="none" stroke="#333" stroke-width="1.300"><path d="M1 1l3.500 3.500L8 1"/></svg></div>
  <span class="ml-[9px] w-[2px] h-[11px] border-y-[3px] border-[#444] bg-[linear-gradient(#444,#444)] bg-[length:2px_2px] bg-center bg-no-repeat"></span>
  <div class="ml-[9px] flex items-center gap-[5px] w-[78px] h-[21px] pl-[5px] rounded-[4px] bg-white shadow-[0_1px_1px_rgba(0,0,0,0.25)]">
    <svg class="w-[12px] h-[12px]" viewBox="0 0 12 12" stroke="#9a9a9a" stroke-width="1.100"><path d="M1 1l10 10M11 1L1 11"/></svg>
    <svg class="w-[12px] h-[12px] ml-[5px]" viewBox="0 0 12 12" fill="none" stroke="#9a9a9a" stroke-width="1.100"><path d="M1 7l4 4 6-10"/></svg>
    <span class="ml-[5px] italic font-bold font-['Liberation_Serif',serif] text-[15px]">fx</span>
    <svg class="w-[8px] h-[5px]" viewBox="0 0 8 5" fill="none" stroke="#333" stroke-width="1.100"><path d="M1 1l3 3 3-3"/></svg>
  </div>
  <div class="ml-[6px] flex items-center justify-between w-[1514px] h-[21px] pl-[9px] pr-[4px] rounded-[4px] bg-white shadow-[0_1px_1px_rgba(0,0,0,0.25)] text-[13.5px] tracking-[0.4px]">=(B54-B53)/B53<svg class="w-[9px] h-[6px]" viewBox="0 0 9 6" fill="none" stroke="#333" stroke-width="1.300"><path d="M1 1l3.500 3.500L8 1"/></svg></div>
</div>

<!-- Column headers -->
<div class="flex mt-[8px] h-[16px] shrink-0 border-b border-[#a8a8a8] font-[Lato,sans-serif] text-[12.5px] leading-[15px] text-[#333] text-center [&>span]:bg-[linear-gradient(#aaa,#aaa)] [&>span]:bg-no-repeat [&>span]:bg-[position:right_bottom] [&>span]:bg-[size:1px_6px]">
  <div class="w-[26px] flex items-end justify-end pr-[3px] pb-[1px]"><svg class="w-[10px] h-[10px]" viewBox="0 0 10 10"><path d="M10 0v10H0z" fill="#b8b8b8"/></svg></div>
  <span class="w-[179px]">A</span><span class="w-[103px]">B</span><span class="w-[105.6px]">C</span><span class="w-[105.6px]">D</span><span class="w-[105.6px]">E</span><span class="w-[105.6px]">F</span><span class="w-[105.6px]">G</span><span class="w-[105.6px]">H</span><span class="w-[105.6px]">I</span><span class="w-[105.6px]">J</span><span class="w-[105.6px]">K</span><span class="w-[105.6px]">L</span><span class="w-[90px]">M</span><span class="w-[90px]">N</span><span class="w-[90px]">O</span><span class="w-[90px]">P</span><span class="w-[90px]">Q</span><span class="w-[87px]">R</span>
</div>

<!-- Sheet + vertical scrollbar -->
<div class="flex h-[764px] shrink-0">
  <main class="w-[1900px] h-[764px] overflow-hidden bg-white font-[Lato,sans-serif] text-[13px] leading-[14px] tracking-[-0.45px] text-black whitespace-nowrap [&>div]:flex [&>div>span]:w-[26px] [&>div>span]:shrink-0 [&>div>span]:text-center [&>div>span]:bg-[#d9d9d9] [&>div>span]:border-b [&>div>span]:border-[#c4c4c4] [&>div>span]:leading-[16px] [&>div>span]:text-[#333] [&>div>span]:font-normal [&>div>div]:grid [&>div>div]:w-[1338px] [&>div>div]:grid-cols-[179px_103px_repeat(10,105.6px)] [&>div>div]:items-center [&>div>div]:text-right [&>div>div>*]:pr-[6px] [&>div>div>:first-child]:text-left [&>div>div>:first-child]:pl-[2px] [&>div>div>:first-child]:tracking-[-0.6px] [&>div>div>i]:pr-[2px] [&>div>div>i]:not-italic">

    <div class="h-[23px]"><span class="leading-[26px]!">1</span><div class="items-end! font-bold text-[17px]"><b class="leading-[22px] tracking-[-0.1px]!">10-Year Project Summary</b></div></div>
    <div class="h-[18px]"><span>2</span><div class="bg-[#b3b3b3] font-bold border-t-2 border-[#222] [&>*]:pr-[2px]!"><b></b><b>Year 0</b><b>Year 1</b><b>Year 2</b><b>Year 3</b><b>Year 4</b><b>Year 5</b><b>Year 6</b><b>Year 7</b><b>Year 8</b><b>Year 9</b><b>Year 10</b></div></div>
    <div class="h-[16px]"><span>3</span><div></div></div>
    <div class="h-[16px]"><span>4</span><div class="bg-[#d9d9d9] border-t-2 border-[#444]"><p>Single-use Revenues</p><p></p><p>$216,452</p><p>$2,908,661</p><p>$10,977,926</p><p>$17,972,450</p><p>$19,839,563</p><p>$20,237,801</p><p>$20,642,557</p><p>$21,055,408</p><p>$21,476,516</p><p>$21,906,047</p></div></div>
    <div class="h-[17px]"><span>5</span><div class="bg-[#d9d9d9]"><p>Membership Revenues</p><p></p><p>$34,392</p><p>$714,367</p><p>$2,266,536</p><p>$3,114,898</p><p>$3,195,340</p><p>$3,259,247</p><p>$3,324,431</p><p>$3,390,920</p><p>$3,458,738</p><p>$3,527,913</p></div></div>
    <div class="h-[18px]"><span>6</span><div class="bg-[#b3b3b3] font-bold border-t-2 border-b-[3px] border-[#222]"><p>Total Revenue</p><p></p><p>$250,843</p><p>$3,623,028</p><p>$13,244,462</p><p>$21,087,348</p><p>$23,034,903</p><p>$23,497,048</p><p>$23,966,989</p><p>$24,446,328</p><p>$24,935,255</p><p>$25,433,960</p></div></div>
    <div class="h-[16px]"><span>7</span><div></div></div>
    <div class="h-[18px]"><span>8</span><div class="bg-[#d9d9d9] font-bold border-t-[1.5px] border-b-2 border-[#333]"><p>Total Variable Costs</p><p></p><p>$70,296</p><p>$968,257</p><p>$3,563,122</p><p>$5,699,999</p><p>$6,199,692</p><p>$6,262,107</p><p>$6,324,728</p><p>$6,387,975</p><p>$6,451,855</p><p>$6,516,374</p></div></div>
    <div class="h-[15px]"><span>9</span><div></div></div>
    <div class="h-[16px]"><span>10</span><div></div></div>
    <div class="h-[19px]"><span>11</span><div class="bg-[#b3b3b3] font-bold border-t-2 border-b-[3px] border-t-[#444] border-b-[#111]"><p>Gross Profit</p><p></p><p>$180,547</p><p>$2,654,771</p><p>$9,681,340</p><p>$15,387,349</p><p>$16,835,211</p><p>$17,234,941</p><p>$17,642,260</p><p>$18,058,353</p><p>$18,483,400</p><p>$18,917,586</p></div></div>
    <div class="h-[16px]"><span>12</span><div class="text-[10.5px] font-bold [&>*]:pr-[2px]!"><p class="pl-[17px]!">GP %</p><p></p><p>72.0%</p><p>73.3%</p><p>73.1%</p><p>73.0%</p><p>73.1%</p><p>73.3%</p><p>73.6%</p><p>73.9%</p><p>74.1%</p><p>74.4%</p></div></div>
    <div class="h-[17px]"><span>13</span><div class="bg-[#d9d9d9] items-stretch! leading-[17px] [&>*]:relative"><p class="pl-[10px]!">Fixed Location Costs</p><p></p>
      <p>$105,417<b class="absolute left-0 top-0 size-[5px] bg-[#0e6b2e] [clip-path:polygon(0_0,100%_0,0_100%)]"></b></p>
      <p>$1,642,200<b class="absolute left-0 top-0 size-[5px] bg-[#0e6b2e] [clip-path:polygon(0_0,100%_0,0_100%)]"></b></p>
      <p>$4,526,607<b class="absolute left-0 top-0 size-[5px] bg-[#0e6b2e] [clip-path:polygon(0_0,100%_0,0_100%)]"></b></p>
      <p>$5,735,829<b class="absolute left-0 top-0 size-[5px] bg-[#0e6b2e] [clip-path:polygon(0_0,100%_0,0_100%)]"></b></p>
      <p>$5,850,546<b class="absolute left-0 top-0 size-[5px] bg-[#0e6b2e] [clip-path:polygon(0_0,100%_0,0_100%)]"></b></p>
      <p>$5,967,557<b class="absolute left-0 top-0 size-[5px] bg-[#0e6b2e] [clip-path:polygon(0_0,100%_0,0_100%)]"></b></p>
      <p>$6,086,908<b class="absolute left-0 top-0 size-[5px] bg-[#0e6b2e] [clip-path:polygon(0_0,100%_0,0_100%)]"></b></p>
      <p>$6,208,646<b class="absolute left-0 top-0 size-[5px] bg-[#0e6b2e] [clip-path:polygon(0_0,100%_0,0_100%)]"></b></p>
      <p>$6,332,819<b class="absolute left-0 top-0 size-[5px] bg-[#0e6b2e] [clip-path:polygon(0_0,100%_0,0_100%)]"></b></p>
      <p>$6,459,475<b class="absolute left-0 top-0 size-[5px] bg-[#0e6b2e] [clip-path:polygon(0_0,100%_0,0_100%)]"></b></p></div></div>
    <div class="h-[20px]"><span>14</span><div class="h-[17px] text-[10.5px] font-bold [&>*]:pr-[2px]!"><p class="pl-[18px]! text-[13px] font-normal">%</p><p></p><p>42.0%</p><p>45.3%</p><p>34.2%</p><p>27.2%</p><p>25.4%</p><p>25.4%</p><p>25.4%</p><p>25.4%</p><p>25.4%</p><p>25.4%</p></div></div>
    <div class="h-[17px]"><span>16</span><div class="bg-[#d9d9d9] pt-[1px]"><p class="pl-[10px]!">G&amp;A</p><p></p><p>$10,000</p><p>$12,240</p><p>$12,485</p><p>$12,734</p><p>$12,989</p><p>$13,249</p><p>$13,514</p><p>$13,784</p><p>$14,060</p><p>$14,341</p></div></div>
    <div class="h-[18px]"><span>17</span><div class="h-[16px] text-[10.5px] font-bold [&>*]:pr-[2px]!"><p class="pl-[18px]! text-[13px] font-normal">%</p><p></p><p>4.0%</p><p>0.3%</p><p>0.1%</p><p>0.1%</p><p>0.1%</p><p>0.1%</p><p>0.1%</p><p>0.1%</p><p>0.1%</p><p>0.1%</p></div></div>
    <div class="h-[17px]"><span>19</span><div class="bg-[#d9d9d9] pt-[1px]"><p class="pl-[10px]!">S&amp;M</p><p></p><p>$20,000</p><p>$121,667</p><p>$131,300</p><p>$132,613</p><p>$135,265</p><p>$137,971</p><p>$140,730</p><p>$143,545</p><p>$146,415</p><p>$149,344</p></div></div>
    <div class="h-[18px]"><span>20</span><div class="h-[16px] text-[10.5px] font-bold [&>*]:pr-[2px]!"><p class="pl-[18px]! text-[13px] font-normal">%</p><p></p><p>8.0%</p><p>3.4%</p><p>1.0%</p><p>0.6%</p><p>0.6%</p><p>0.6%</p><p>0.6%</p><p>0.6%</p><p>0.6%</p><p>0.6%</p></div></div>
    <div class="h-[17px]"><span>22</span><div class="bg-[#d9d9d9]"><p class="pl-[10px]!">R&amp;D</p><p></p><p>$20,833</p><p>$25,500</p><p>$26,010</p><p>$26,530</p><p>$27,061</p><p>$27,602</p><p>$28,154</p><p>$28,717</p><p>$29,291</p><p>$29,877</p></div></div>
    <div class="h-[19px]"><span>23</span><div class="h-[16px] text-[10.5px] font-bold [&>*]:pr-[2px]!"><p class="pl-[18px]! text-[13px] font-normal">%</p><p></p><p>8.3%</p><p>0.7%</p><p>0.2%</p><p>0.1%</p><p>0.1%</p><p>0.1%</p><p>0.1%</p><p>0.1%</p><p>0.1%</p><p>0.1%</p></div></div>
    <div class="h-[18px]"><span>25</span><div class="bg-[#b3b3b3] font-bold border-t-2 border-b-[3px] border-t-[#444] border-b-[#111]"><p>Total Overhead Expenses</p><p></p><p>$156,250</p><p>$1,801,607</p><p>$4,696,402</p><p>$5,907,707</p><p>$6,025,861</p><p>$6,146,378</p><p>$6,269,306</p><p>$6,394,692</p><p>$6,522,586</p><p>$6,653,038</p></div></div>
    <div class="h-[16px]"><span>26</span><div></div></div>
    <div class="h-[18px]"><span>27</span><div class="bg-[#b3b3b3] font-bold border-t-2 border-b-[3px] border-t-[#333] border-b-[#111]"><p>EBITDA</p><p></p><p>$24,297</p><p>$853,164</p><p>$4,984,938</p><p>$9,479,642</p><p>$10,809,350</p><p>$11,088,562</p><p>$11,372,955</p><p>$11,663,661</p><p>$11,960,814</p><p>$12,264,549</p></div></div>
    <div class="h-[16px]"><span>28</span><div class="text-[10.5px] font-bold [&>*]:pr-[2px]!"><p class="pl-[18px]! text-[13px] font-normal">%</p><p></p><p>9.7%</p><p>23.5%</p><p>37.6%</p><p>45.0%</p><p>46.9%</p><p>47.2%</p><p>47.5%</p><p>47.7%</p><p>48.0%</p><p>48.2%</p></div></div>
    <div class="h-[18px]"><span>29</span><div class="font-bold border-t-2 border-b-2 border-t-[#444] border-b-[#111]"><p class="pl-[5px]!">4-Wall EBITDA</p><p></p><p>$75,130</p><p>$1,012,571</p><p>$5,154,733</p><p>$9,651,520</p><p>$10,984,665</p><p>$11,267,384</p><p>$11,555,353</p><p>$11,849,707</p><p>$12,150,581</p><p>$12,458,111</p></div></div>
    <div class="h-[16px]"><span>30</span><div></div></div>
    <div class="h-[16px]"><span>31</span><div class="pt-[1px]"><p class="pl-[18px]!">DSCR</p><p></p><p>0.0</p><p>0.5</p><p>1.5</p><p>2.5</p><p>2.9</p><p>2.9</p><p>3.0</p><p>3.1</p><p>3.2</p><p>1.2</p></div></div>
    <div class="h-[17px]"><span>32</span><div class="pt-[1px]"><p class="font-bold underline">Other Cash Flow Items</p></div></div>
    <div class="h-[16px]"><span>33</span><div class="pt-[1px]"><p class="pl-[10px]!">Taxes</p><p></p><p>-</p><p>-</p><i>($395,919)</i><i>($1,482,706)</i><i>($1,853,178)</i><i>($1,963,777)</i><i>($2,078,619)</i><i>($2,198,203)</i><i>($2,322,789)</i><i>($22,281,258)</i></div></div>
    <div class="h-[17px]"><span>34</span><div class="pt-[1px]"><p class="pl-[10px]!">CapEx</p><p></p><i>($18,190,000)</i><i>($27,360,000)</i><i>($9,840,000)</i><p>-</p><p>-</p><p>-</p><p>-</p><p>-</p><p>-</p><p>-</p></div></div>
    <div class="h-[16px]"><span>35</span><div class="pt-[1px]"><p class="pl-[10px]!">Debt Service</p><p></p><i>($497,139)</i><i>($1,894,516)</i><i>($3,435,013)</i><i>($3,776,335)</i><i>($3,776,335)</i><i>($3,776,335)</i><i>($3,776,335)</i><i>($3,776,335)</i><i>($3,776,335)</i><i>($10,257,287)</i></div></div>
    <div class="h-[17px]"><span>36</span><div><p class="pl-[10px]!">Startup Costs</p><i>($5,000)</i></div></div>
    <div class="h-[16px]"><span>37</span><div class="pt-[1px]"><p class="pl-[10px]!">Proceeds from Exit</p><p></p><p>-</p><p>-</p><p>-</p><p>-</p><p>-</p><p>-</p><p>-</p><p>-</p><p>-</p><p>$146,322,744</p></div></div>
    <div class="h-[17px]"><span>38</span><div class="pt-[1px]"><p class="pl-[10px]!">Loan Proceeds</p><p></p><p>$7,993,500</p><p>$13,104,000</p><p>$6,006,000</p><p>-</p><p>-</p><p>-</p><p>-</p><p>-</p><p>-</p><p>-</p></div></div>
    <div class="h-[19px]"><span>39</span><div class="bg-[#b3b3b3] font-bold border-t-2 border-b-[3px] border-t-[#333] border-b-[#111]"><p>Cash Flow</p><i>($5,000)</i><i>($10,669,342)</i><i>($15,297,351)</i><i>($2,679,994)</i><p>$4,220,601</p><p>$5,179,837</p><p>$5,348,450</p><p>$5,518,000</p><p>$5,689,123</p><p>$5,861,690</p><p>$126,048,748</p></div></div>
    <div class="h-[16px]"><span>40</span><div></div></div>
    <div class="h-[16px]"><span>41</span><div></div><u class="w-[90px] pt-[2px] text-center no-underline">check</u></div>
    <div class="h-[17px]"><span>42</span><div class="border-b-2 border-[#555] pt-[1px]"><p class="font-bold">Cash Position</p><i>($5,000)</i><i>($10,674,342)</i><i>($25,971,693)</i><i>($28,651,687)</i><i>($24,431,086)</i><i>($19,251,249)</i><i>($13,902,799)</i><i>($8,384,799)</i><i>($2,695,676)</i><p>$3,166,014</p><p>$129,214,762</p></div><u class="w-[90px] pt-[2px] text-center no-underline">0.00</u></div>
    <div class="h-[16px]"><span>43</span><div></div></div>
    <div class="h-[17px]"><span>44</span><div></div></div>
    <div class="h-[16px]"><span>45</span><div></div></div>

    <section class="flex h-[62px] overflow-hidden">
      <ul class="w-[26px] shrink-0 bg-[#d9d9d9] text-center text-[#333] leading-[16px] [&>li]:h-[16.5px] [&>li]:border-b [&>li]:border-[#c4c4c4]">
        <li>46</li><li>47</li><li>48</li><li>49</li>
      </ul>
      <div class="grid grid-cols-[178px_103px] auto-rows-[16.5px] w-[281px] h-[66px] items-center bg-[#d9d9d9] border-t-2 border-[#111] [&>b]:font-normal [&>b]:pl-[2px] [&>p]:text-center [&>p]:h-full [&>p]:leading-[16px] [&>p]:border-x [&>p]:border-[#222]">
        <b class="underline">Project IRR</b><p>20.6%</p>
        <b>Equity Required</b><p>$29,351,698</p>
        <b>Project Cash Returned</b><p>$158,566,459</p>
        <b>Equity Multiple</b><p>5.40</p>
      </div>
      <article class="ml-[35px] w-[821px] h-[80px] bg-[#d9d9d9] border border-[#222] pl-[8px] tracking-[-0.3px]">
        <h2 class="pt-[9px] text-center text-[17px] leading-[22px] font-bold text-[#1d2a44] pr-[8px]">Annnual Revenue</h2>
        <p class="mt-[4px] text-[10px] leading-[14px] text-[#444]">$30,000,000</p>
      </article>
      <article class="w-[727px] h-[80px] bg-[#d9d9d9] border border-[#222] pl-[8px] tracking-[-0.3px]">
        <h2 class="pt-[9px] text-center text-[17px] leading-[22px] font-bold text-[#1d2a44] pr-[8px]">Annual EBITDA</h2>
        <p class="mt-[4px] text-[10px] leading-[14px] text-[#444]">$14,000,000</p>
      </article>
    </section>
  </main>
  <aside class="flex flex-col items-center w-[20px] h-[764px] pl-[2px]">
    <svg class="-mt-[14px] w-[9px] h-[7px]" viewBox="0 0 9 7"><path d="M4.500 0L9 7H0z" fill="#333"/></svg>
    <span class="mt-[6px] w-[10px] h-[480px] rounded-full bg-[#2b2b2b]"></span>
    <svg class="mt-[272px] w-[9px] h-[7px]" viewBox="0 0 9 7"><path d="M4.500 7L9 0H0z" fill="#333"/></svg>
  </aside>
</div>

<!-- Sheet tabs -->
<div class="flex items-start h-[30px] shrink-0 text-[13px] tracking-[-0.25px] text-black whitespace-nowrap [&>p]:flex [&>p]:items-center [&>p]:justify-center [&>p]:h-[23px] [&>p]:mt-[3px] [&>p]:shrink-0 [&>p]:rounded-[4px] [&>p]:ml-[8px]">
  <svg class="ml-[22px] mt-[9px] w-[7px] h-[12px]" viewBox="0 0 7 12" fill="none" stroke="#555"><path d="M6 1L1 6l5 5"/></svg>
  <svg class="ml-[24px] mt-[9px] w-[7px] h-[12px]" viewBox="0 0 7 12" fill="none" stroke="#333"><path d="M1 1l5 5-5 5"/></svg>
  <p class="ml-[45px]! w-[49px] bg-white">Index</p>
  <p class="w-[102px] bg-[#ffff99]">Global Control</p>
  <p class="w-[131px] h-[26px]! mt-0! rounded-none! font-bold tracking-[-0.55px] border-b-2 border-[#17402a] -mb-[2px] pb-[1px] bg-[linear-gradient(#f4eef8_0,#e6dcec_14%,#cfcfd4_14%,#cfcfd4_42%,#baaecb_42%,#baaecb_62%,#9e86b8_62%,#9e86b8_100%)] shadow-[0_2px_0_#bdbdbd]">Executive Summary</p>
  <p class="w-[69px] bg-[#ffff99]">Ramping</p>
  <p class="w-[72px] bg-[#ffff99]">CAPEX (1)</p>
  <p class="w-[75px] bg-[#ffff99]">CAPEX (2)</p>
  <p class="w-[34px] ml-[7px]!">M1</p>
  <p class="w-[33px]">M2</p>
  <p class="w-[49px] bg-[#ffff99]">OPEX</p>
  <p class="w-[51px] bg-[#ffff99]">Loan2</p>
  <p class="w-[51px] bg-[#ffff99]">Loan3</p>
  <p class="w-[75px] bg-[#ffff99]">Cap Table</p>
  <p class="w-[94px] bg-[#ffff99]">Startup Costs</p>
  <p class="w-[106px] bg-[#ffff99]">Terminal Value</p>
  <p class="w-[48px] ml-[7px]! bg-[#404040] text-[#c8c8c8]">IS- M</p>
  <p class="w-[44px] ml-[7px]! bg-[#404040] text-[#c8c8c8]">IS- A</p>
  <p class="w-[51px] bg-[#404040] text-[#c8c8c8]">BS- M</p>
  <p class="w-[48px] bg-[#404040] text-[#c8c8c8]">BS- A</p>
  <p class="w-[52px] bg-[#404040] text-[#c8c8c8]">CF- M</p>
  <p class="w-[48px] bg-[#404040] text-[#c8c8c8]">CF- A</p>
  <p class="w-[90px] bg-[#2e1065] text-[#c9c3dc]">DCF Analysis</p>
  <p class="w-[17px] ml-[9px]! rounded-r-none! justify-start! pl-[5px] overflow-hidden bg-[#2e1065] text-[#c9c3dc]">V</p>
  <svg class="ml-[10px] mt-[12px] w-[9px] h-[3px]" viewBox="0 0 9 3" fill="#333"><circle cx="1.200" cy="1.500" r="1.200"/><circle cx="4.500" cy="1.500" r="1.200"/><circle cx="7.800" cy="1.500" r="1.200"/></svg>
  <svg class="ml-[19px] mt-[8px] w-[12px] h-[12px]" viewBox="0 0 12 12" stroke="#222" stroke-width="1.400"><path d="M6 0v12M0 6h12"/></svg>
  <svg class="ml-[24px] mt-[8px] w-[3px] h-[13px]" viewBox="0 0 3 13" fill="#333"><circle cx="1.500" cy="1.500" r="1.200"/><circle cx="1.500" cy="6.500" r="1.200"/><circle cx="1.500" cy="11.500" r="1.200"/></svg>
  <svg class="ml-[17px] mt-[10px] w-[6px] h-[9px]" viewBox="0 0 6 9"><path d="M6 0v9L0 4.500z" fill="#333"/></svg>
  <span class="ml-[6px] mt-[10px] w-[111px] h-[9px] rounded-full bg-[#2b2b2b]"></span>
  <svg class="ml-[15px] mt-[10px] w-[6px] h-[9px]" viewBox="0 0 6 9"><path d="M0 0v9l6-4.500z" fill="#333"/></svg>
</div>

<!-- Status bar -->
<footer class="flex items-center h-[20px] shrink-0 border-t border-white text-[10.5px] text-[#333] tracking-[-0.2px] whitespace-nowrap">
  <span class="ml-[10px] w-[30px]">Ready</span>
  <svg class="ml-[17px] w-[14px] h-[13px]" viewBox="0 0 14 13" fill="none" stroke="#333"><path d="M.5.5h9v12h-9zM2 3h6M2 5.500h3M2 8h3"/><circle cx="9" cy="8.500" r="3" fill="#fff"/><circle cx="9" cy="8.500" r="1" fill="#333"/></svg>
  <svg class="ml-[15px] w-[15px] h-[15px]" viewBox="0 0 15 15" fill="none" stroke="#333"><circle cx="6.500" cy="2.500" r="1.800"/><path d="M1 5h11M5 5v4l-3 5M8 5v4l3 5"/><path d="M9 9l5 5M14 9l-5 5" stroke="#666"/></svg>
  <b class="pl-[1px] font-bold tracking-[-0.45px]">Accessibility: Investigate</b>
  <div class="ml-auto flex items-center justify-center w-[38px] h-[19px] bg-[#c6c6c6]"><svg class="w-[13px] h-[14px]" viewBox="0 0 13 14" fill="none" stroke="#222" stroke-width="1.100"><path d="M.5.5h12v13H.5zM.5 4.800h12M.5 9.200h12M4.500.5v13M8.500.5v13"/></svg></div>
  <svg class="ml-[13px] w-[13px] h-[14px]" viewBox="0 0 13 14" fill="none" stroke="#222" stroke-width="1.100"><path d="M.5.5h12v13H.5zM3 3h7v8H3zM3 5.500h7M3 8h7"/></svg>
  <svg class="ml-[24px] w-[13px] h-[14px]" viewBox="0 0 13 14" fill="none" stroke="#222" stroke-width="1.100"><path d="M.5.5h12v13H.5zM.5 9h8V.5"/></svg>
  <span class="ml-[17px] w-[6px] h-px bg-[#333]"></span>
  <div class="ml-[6px] relative flex items-center w-[94px] h-[12px]"><span class="w-[94px] h-px bg-[#333]"></span><span class="absolute left-[40px] w-[4px] h-[12px] bg-[#333]"></span></div>
  <svg class="ml-[5px] w-[7px] h-[7px]" viewBox="0 0 7 7" stroke="#333"><path d="M3.500 0v7M0 3.500h7"/></svg>
  <span class="ml-[10px] mr-[14px]">90%</span>
</footer>

<!-- Taskbar -->
<div class="flex items-center h-[45px] shrink-0 border-t border-[#8a8f98] text-[#1c2430] text-[12px] tracking-[-0.3px] whitespace-nowrap [background:radial-gradient(#b8e2dc_0.5px,transparent_0.9px)_0_0/4px_5px,linear-gradient(90deg,#9cd0d6_0,#9cd0d6_28.5%,#9ab8d8_29%,#9ab8d8_100%)]">
  <svg class="ml-[20px] w-[26px] h-[32px]" viewBox="0 0 26 32"><circle cx="9" cy="20" r="9" fill="#f2781e"/><path d="M5 12l6 2-3 8-5 4z" fill="#e25a12"/><circle cx="17" cy="10" r="9" fill="#b23a1a"/><text x="17" y="14" font-size="11" text-anchor="middle" fill="#f4c9a8" font-family="Open Sans">3</text></svg>
  <div class="ml-[3px] w-[60px] flex flex-col leading-[15px] -mt-[2px]"><span>66°F</span><span>Sunny</span></div>
  <svg class="ml-[611px] w-[22px] h-[22px]" viewBox="0 0 22 22"><path d="M11 2L20 0v10H11z" fill="#1f8bd8"/><path d="M2 5l8-2.500V10H2z" fill="#36a3e8"/><path d="M2 11h8v9H2z" fill="#0f6fc6"/><path d="M11 11h9v11h-9z" fill="#0f5db0"/></svg>
  <div class="ml-[14px] flex items-center w-[205px] h-[29px] rounded-full bg-[#eef7fb] pl-[11px]">
    <svg class="w-[14px] h-[15px]" viewBox="0 0 14 15" fill="none" stroke="#111" stroke-width="1.800"><circle cx="6" cy="6" r="4.600"/><path d="M9.500 9.500l3.500 4"/></svg>
    <span class="ml-[9px] text-[12.5px] text-[#333]">Search</span>
    <svg class="ml-[81px] w-[44px] h-[28px]" viewBox="0 0 44 28"><ellipse cx="8" cy="13" rx="6.500" ry="8" fill="#e03a2a"/><path d="M8 21l2 7" stroke="#555"/><ellipse cx="22" cy="9" rx="7.500" ry="9" fill="#2673c8"/><path d="M22 18v10" stroke="#555"/><ellipse cx="34" cy="14" rx="6.500" ry="8" fill="#e88a1e"/><path d="M34 22l-2 6" stroke="#555"/></svg>
  </div>
  <svg class="ml-[12px] w-[22px] h-[26px]" viewBox="0 0 22 26"><rect x="1" y="8" width="16" height="18" fill="#111"/><path d="M7 0h15v18H7z" fill="#e8e8e8"/><path d="M7 8h10v10H7z" fill="#7a7a7a"/></svg>
  <div class="ml-[19px] flex flex-col items-center mt-[5px]"><svg class="w-[24px] h-[29px]" viewBox="0 0 24 29"><path d="M0 0h10l3 4h11v25H0z" fill="#f5a623"/><path d="M0 0h10l3 4H0z" fill="#b87c2a"/><rect x="3" y="17" width="18" height="7" rx="1" fill="#2a73c8"/></svg><span class="mt-[1px] w-[4px] h-[4px] rounded-full bg-[#444]"></span></div>
  <div class="ml-[17px] flex flex-col items-center mt-[5px]"><svg class="w-[22px] h-[29px]" viewBox="0 0 22 29" fill="none"><ellipse cx="11" cy="14.500" rx="8" ry="12" stroke="#d01f2a" stroke-width="5"/></svg><span class="mt-[1px] w-[4px] h-[4px] rounded-full bg-[#444]"></span></div>
  <svg class="ml-[20px] w-[24px] h-[32px]" viewBox="0 0 24 32"><rect x="0" y="1" width="16" height="20" rx="2" fill="#dcdcdc" stroke="#999"/><rect x="3" y="4" width="8" height="8" fill="none" stroke="#c7281f" stroke-width="2" stroke-dasharray="2 1"/><path d="M13 10v10M13 20c-2 4 1 9 4 7M13 20c5 0 8 0 8 4s-4 4-4 3" stroke="#1f73d8" stroke-width="1.800" fill="none"/></svg>
  <div class="ml-[15px] flex flex-col items-center mt-[5px]"><svg class="w-[24px] h-[29px]" viewBox="0 0 24 29"><rect x="3" y="0" width="21" height="29" rx="1" fill="#185c37"/><rect x="3" y="22" width="21" height="7" fill="#0a2a18"/><rect x="0" y="7" width="13" height="14" fill="#107c41"/><path d="M3.500 11l5 6M8.500 11l-5 6" stroke="#fff" stroke-width="1.300"/></svg><span class="mt-[1px] w-[4px] h-[4px] rounded-full bg-[#444]"></span></div>
  <div class="ml-[17px] flex flex-col items-center -mt-[2px]"><svg class="w-[30px] h-[36px]" viewBox="0 0 30 36"><circle cx="13" cy="21" r="12" fill="#3aa655"/><path d="M13 9a12 12 0 0 1 11 7H13z" fill="#e8b623"/><path d="M3 14a12 12 0 0 1 10-5v7l-6 9z" fill="#d93c2e"/><circle cx="13" cy="21" r="5.500" fill="#2c74d8" stroke="#fff" stroke-width="1.500"/><ellipse cx="22" cy="9" rx="7" ry="8.500" fill="#7f8388"/><path d="M15 8h14" stroke="#5f6368"/></svg><span class="w-[4px] h-[4px] rounded-full bg-[#444]"></span></div>
  <svg class="ml-[563px] w-[12px] h-[8px]" viewBox="0 0 12 8" fill="none" stroke="#111" stroke-width="1.500"><path d="M1 7l5-5 5 5"/></svg>
  <svg class="ml-[15px] w-[18px] h-[22px]" viewBox="0 0 18 22" fill="none" stroke="#111" stroke-width="1.200"><path d="M1 3h11v13H1zM6 16v4M3 20.500h7"/><rect x="11" y="1" width="6" height="9" fill="#9ab8d8"/></svg>
  <svg class="ml-[4px] w-[16px] h-[15px]" viewBox="0 0 16 15" fill="none" stroke="#111"><path d="M1 5h3l4-4v13l-4-4H1zM10.500 4c2 2 2 5 0 7M13 2c3 3 3 8 0 11"/></svg>
  <div class="ml-[23px] flex flex-col items-end leading-[15px] text-[12px] -mt-[2px]"><span>8:04 AM</span><span>8/18/2025</span></div>
</div>
</div>
</body>
</html>
